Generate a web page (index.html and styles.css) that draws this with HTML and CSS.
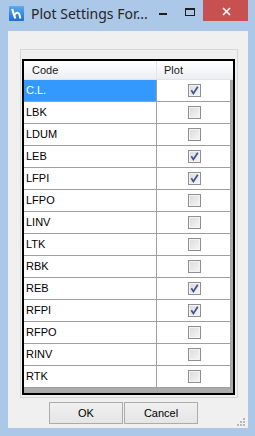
FILE: index.html
```html
<!DOCTYPE html>
<html>
	<head>
		<meta charset="UTF-8">
		<title>Plot Settings For...</title>
		<link rel="stylesheet" href="styles.css">
	</head>
	<body>
		<div class="window">
			<div class="titlebar">
				<svg class="app-icon" width="15" height="15" viewBox="0 0 15 15">
					<defs>
						<linearGradient id="ig" x1="0" y1="0" x2="0" y2="1">
							<stop offset="0" stop-color="#5aaaf5"/>
							<stop offset="1" stop-color="#1d6cd0"/>
						</linearGradient>
					</defs>
					<rect x="0" y="0" width="15" height="15" rx="1" fill="url(#ig)"/>
					<path d="M3.2 3 L6.2 12.5" stroke="#fff" stroke-width="2.2" fill="none"/>
					<path d="M5.2 9 Q7.5 5.8 9.6 7.2 Q10.6 8 11.4 12.5" stroke="#fff" stroke-width="2" fill="none"/>
				</svg>
				<span class="title">Plot Settings For...</span>
				<div class="controls">
					<svg class="tb-btn" width="26" height="20"><rect x="9" y="13" width="8" height="2" fill="#1e1e1e"/></svg>
					<svg class="tb-btn" width="27" height="20">
						<rect x="9.5" y="8.5" width="9" height="7" fill="none" stroke="#1e1e1e"/>
						<rect x="9" y="8" width="10" height="2" fill="#1e1e1e"/>
					</svg>
					<div class="tb-close">
						<svg width="45" height="21"><path d="M20 8 L27 15 M27 8 L20 15" stroke="#fff" stroke-width="1.6"/></svg>
					</div>
				</div>
			</div>
			<div class="client">
				<div class="panel">
					<div class="grid">
						<div class="grid-head">
							<div class="hcell hcode">Code</div>
							<div class="hcell hplot">Plot</div>
						</div>
						<div class="row"><div class="cell code selected">C.L.</div><div class="cell plot"><span class="cb on"><svg width="9" height="9"><path d="M1.3 4.2 L3.4 7.4 L7.8 0.8" stroke="#3d5290" stroke-width="1.7" fill="none"/></svg></span></div></div>
						<div class="row"><div class="cell code">LBK</div><div class="cell plot"><span class="cb"></span></div></div>
						<div class="row"><div class="cell code">LDUM</div><div class="cell plot"><span class="cb"></span></div></div>
						<div class="row"><div class="cell code">LEB</div><div class="cell plot"><span class="cb on"><svg width="9" height="9"><path d="M1.3 4.2 L3.4 7.4 L7.8 0.8" stroke="#3d5290" stroke-width="1.7" fill="none"/></svg></span></div></div>
						<div class="row"><div class="cell code">LFPI</div><div class="cell plot"><span class="cb on"><svg width="9" height="9"><path d="M1.3 4.2 L3.4 7.4 L7.8 0.8" stroke="#3d5290" stroke-width="1.7" fill="none"/></svg></span></div></div>
						<div class="row"><div class="cell code">LFPO</div><div class="cell plot"><span class="cb"></span></div></div>
						<div class="row"><div class="cell code">LINV</div><div class="cell plot"><span class="cb"></span></div></div>
						<div class="row"><div class="cell code">LTK</div><div class="cell plot"><span class="cb"></span></div></div>
						<div class="row"><div class="cell code">RBK</div><div class="cell plot"><span class="cb"></span></div></div>
						<div class="row"><div class="cell code">REB</div><div class="cell plot"><span class="cb on"><svg width="9" height="9"><path d="M1.3 4.2 L3.4 7.4 L7.8 0.8" stroke="#3d5290" stroke-width="1.7" fill="none"/></svg></span></div></div>
						<div class="row"><div class="cell code">RFPI</div><div class="cell plot"><span class="cb on"><svg width="9" height="9"><path d="M1.3 4.2 L3.4 7.4 L7.8 0.8" stroke="#3d5290" stroke-width="1.7" fill="none"/></svg></span></div></div>
						<div class="row"><div class="cell code">RFPO</div><div class="cell plot"><span class="cb"></span></div></div>
						<div class="row"><div class="cell code">RINV</div><div class="cell plot"><span class="cb"></span></div></div>
						<div class="row"><div class="cell code">RTK</div><div class="cell plot"><span class="cb"></span></div></div>
					</div>
				</div>
				<div class="buttons">
					<button class="btn">OK</button>
					<button class="btn">Cancel</button>
				</div>
				<svg class="grip" width="8" height="8">
					<rect x="6" y="0" width="2" height="2" fill="#b9b9b9"/>
					<rect x="3" y="3" width="2" height="2" fill="#b9b9b9"/>
					<rect x="6" y="3" width="2" height="2" fill="#b9b9b9"/>
					<rect x="0" y="6" width="2" height="2" fill="#b9b9b9"/>
					<rect x="3" y="6" width="2" height="2" fill="#b9b9b9"/>
					<rect x="6" y="6" width="2" height="2" fill="#b9b9b9"/>
				</svg>
			</div>
		</div>
	</body>
</html>
```
FILE: styles.css
```css
*{ margin: 0; padding: 0; box-sizing: border-box;}
body{ width: 255px; height: 436px; overflow: hidden; font-family: "Liberation Sans", Arial, sans-serif; font-size: 11px;}
.window{ width: 255px; height: 436px; background: #abc8e8; display: flex; flex-direction: column;}
/* title bar */
.titlebar{ height: 31px; display: flex; align-items: flex-start; flex: none;}
.app-icon{ margin: 6px 0 0 9px; flex: none;}
.title{ margin: 3px 0 0 7px; font-family: "Noto Sans", "Open Sans", sans-serif; font-size: 14px; line-height: 22px; color: #262626; white-space: nowrap;}
.controls{ margin-left: auto; margin-right: 7px; display: flex; align-items: flex-start;}
.tb-btn{ display: block;}
.tb-close{ width: 45px; height: 21px; background: #c75050;}
.tb-close svg{ display: block;}
/* client */
.client{ flex: 1; margin: 0 7px 8px 8px; background: #f0f0f0; position: relative; display: flex; flex-direction: column;}
.panel{ margin: 18px 10px 0 12px; height: 349px; border: 1px solid #d8d8d8; padding: 9px 2px 2px 1px;}
.grid{ height: 336px; border: 2px solid #000; background: #ababab;}
.grid-head{ height: 19px; display: flex; background: linear-gradient(#ffffff, #f4f5f7 60%, #eceef1); border-bottom: 1px solid #e2e4e8;}
.hcell{ line-height: 18px; color: #1a1a1a;}
.hcode{ width: 133px; padding-left: 8px; border-right: 1px solid #e3e5e9;}
.hplot{ flex: 1; padding-left: 7px;}
.row{ display: flex; height: 22px; width: 207px;}
.cell{ height: 22px; background: #fff; border-right: 1px solid #a0a0a0; border-bottom: 1px solid #a0a0a0; line-height: 21px; color: #000;}
.code{ width: 133px; padding-left: 2px;}
.plot{ width: 74px; display: flex; align-items: center; justify-content: center; padding-left: 1px;}
.selected{ background: #3399ff; color: #fff;}
.cb{ width: 13px; height: 13px; border: 1px solid #8e8f8f; background: linear-gradient(135deg, #d9dadc, #f6f6f6); box-shadow: inset 0 0 0 1px #f4f4f4; display: flex; align-items: center; justify-content: center;}
.cb svg{ display: block;}
/* buttons */
.buttons{ display: flex; gap: 1px; margin: 4px 0 0 41px;}
.btn{ width: 74px; height: 22px; border: 1px solid #acacac; background: linear-gradient(#f0f0f0, #e5e5e5); font-family: "Liberation Sans", Arial, sans-serif; font-size: 11px; color: #000;}
.grip{ position: absolute; right: 3px; bottom: 2px;}
```
